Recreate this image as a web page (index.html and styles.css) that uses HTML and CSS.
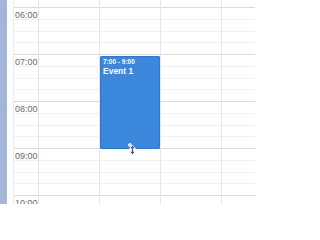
FILE: index.html
```html
<!DOCTYPE html>
<html>
<head>
<meta charset="utf-8">
<link rel="stylesheet" href="styles.css">
</head>
<body>
<div class="page">
  <div class="sidebar"></div>
  <div class="main">
    <div class="grid">
      <div class="timecol">
        <div class="hour"><span class="label">06:00</span></div>
        <div class="hour"><span class="label">07:00</span></div>
        <div class="hour"><span class="label">08:00</span></div>
        <div class="hour"><span class="label">09:00</span></div>
        <div class="hour"><span class="label">10:00</span></div>
      </div>
      <div class="day"></div>
      <div class="day">
        <div class="event">
          <div class="ev-time">7:00 - 9:00</div>
          <div class="ev-title">Event 1</div>
          <div class="handle"></div>
        </div>
        <svg class="cursor" width="7" height="10" viewBox="0 0 7 10">
          <path d="M3.5 0.5 L6.5 3.5 L4.5 3.5 L4.5 6.5 L6.5 6.5 L3.5 9.5 L0.5 6.5 L2.5 6.5 L2.5 3.5 L0.5 3.5 Z" fill="#555" stroke="#fff" stroke-width="0.8"/>
        </svg>
      </div>
      <div class="day"></div>
      <div class="day"></div>
    </div>
  </div>
</div>
</body>
</html>
```

FILE: styles.css
```css
html, body {
  margin: 0;
  padding: 0;
  background: #fff;
  overflow: hidden;
}
.page {
  display: flex;
  width: 255px;
  height: 204px;
  overflow: hidden;
}
.sidebar {
  width: 7px;
  flex: none;
  background: #a3b6da;
}
.main {
  margin-left: 6px;
  flex: 1;
  overflow: hidden;
}
.grid {
  display: flex;
  height: 204px;
  background-image: linear-gradient(to bottom,
    #dcdcdc 0, #dcdcdc 1px,
    transparent 1px, transparent 11.75px,
    #f0f0f0 11.75px, #f0f0f0 12.75px,
    transparent 12.75px, transparent 23.5px,
    #f0f0f0 23.5px, #f0f0f0 24.5px,
    transparent 24.5px, transparent 35.25px,
    #f0f0f0 35.25px, #f0f0f0 36.25px,
    transparent 36.25px);
  background-size: 100% 47px;
  background-position: 0 7px;
  background-repeat: repeat;
}
.timecol {
  width: 24px;
  flex: none;
  border-left: 1px solid #ececec;
  border-right: 1px solid #e2e2e2;
  padding-top: 7px;
  font-family: "Liberation Sans", Arial, sans-serif;
  font-size: 9px;
  color: #6a6a6a;
}
.hour {
  height: 47px;
  box-sizing: border-box;
  padding: 3px 0 0 1px;
  line-height: 10px;
}
.day {
  width: 60px;
  flex: none;
  border-right: 1px solid #e6e6e6;
  position: relative;
}
.event {
  position: absolute;
  left: 0;
  right: 0;
  top: 56px;
  height: 93px;
  box-sizing: border-box;
  background: #3a87dc;
  border: 1px solid #3277c8;
  border-radius: 1px;
  color: #fff;
  font-family: "Liberation Sans", Arial, sans-serif;
  font-weight: bold;
  padding: 1px 2px;
}
.ev-time {
  font-size: 6.5px;
  line-height: 8px;
}
.ev-title {
  font-size: 8.5px;
  line-height: 10px;
}
.handle {
  position: absolute;
  left: 50%;
  bottom: 1px;
  width: 4px;
  height: 4px;
  margin-left: -2px;
  border-radius: 50%;
  background: #cfe2f6;
  border: 1px solid #eaf2fb;
  box-sizing: border-box;
}
.cursor {
  position: absolute;
  left: 29px;
  top: 145px;
}
```
